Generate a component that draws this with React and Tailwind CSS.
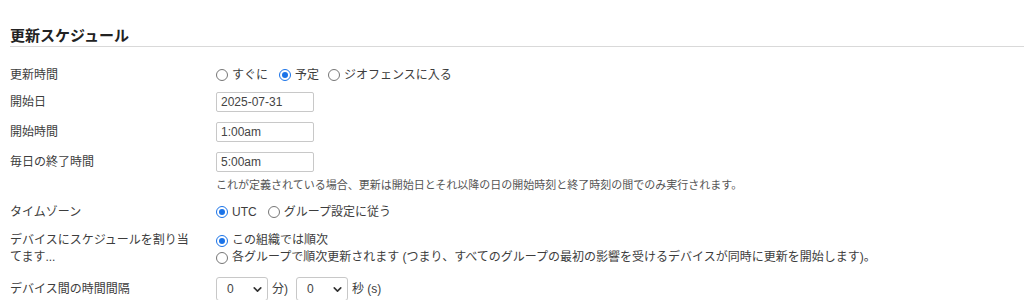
import React from "react";
import { ChevronDown } from "lucide-react";

function Radio({ checked, label, className = "" }) {
  return (
    <label className={`flex items-center gap-[4px] ${className}`}>
      <span
        className={`w-[12px] h-[12px] rounded-full border flex items-center justify-center bg-white ${
          checked ? "border-[#1a73e8]" : "border-[#767676]"
        }`}
      >
        {checked && <span className="w-[6px] h-[6px] rounded-full bg-[#1a73e8]"></span>}
      </span>
      <span>{label}</span>
    </label>
  );
}

function Row({ label, children, h }) {
  return (
    <div className={`flex items-center ${h}`}>
      <div className="w-[206px] pr-[24px] shrink-0">{label}</div>
      <div className="flex items-center">{children}</div>
    </div>
  );
}

function TextBox({ value }) {
  return (
    <div className="w-[98px] h-[20px] border border-[#c8c8c8] rounded-[2px] pl-[4px] flex items-center text-[12px] text-[#444]">
      {value}
    </div>
  );
}

function Select({ value }) {
  return (
    <div className="w-[52px] h-[24px] border border-[#c8c8c8] rounded-[3px] flex items-center justify-between pl-[10px] pr-[3px] text-[12px] text-[#444]">
      <span>{value}</span>
      <ChevronDown size={13} strokeWidth={3} className="text-[#333]" />
    </div>
  );
}

export default function App() {
  return (
    <div
      className="w-[1024px] h-[300px] bg-white text-[12px] text-[#3d3d3d] overflow-hidden pl-[10px]"
      style={{ fontFamily: '"Liberation Sans", "Noto Sans CJK JP", sans-serif' }}
    >
      <div className="pt-[26px] pb-[0px] border-b border-[#d9d9d9]">
        <h2 className="text-[15px] font-bold text-[#222] leading-[20px]">更新スケジュール</h2>
      </div>
      <div className="pt-[13px]">
        <Row label="更新時間" h="h-[30px]">
          <Radio label="すぐに" />
          <Radio label="予定" checked className="ml-[11px]" />
          <Radio label="ジオフェンスに入る" className="ml-[9px]" />
        </Row>
        <Row label="開始日" h="h-[24px]">
          <TextBox value="2025-07-31" />
        </Row>
        <Row label="開始時間" h="h-[36px]">
          <TextBox value="1:00am" />
        </Row>
        <Row label="毎日の終了時間" h="h-[24px]">
          <TextBox value="5:00am" />
        </Row>
        <div className="pl-[206px] text-[11px] text-[#555] h-[22px] flex items-center">
          これが定義されている場合、更新は開始日とそれ以降の日の開始時刻と終了時刻の間でのみ実行されます。
        </div>
        <Row label="タイムゾーン" h="h-[32px]">
          <Radio label="UTC" checked />
          <Radio label="グループ設定に従う" className="ml-[11px]" />
        </Row>
        <div className="flex h-[41px] pt-[4px]">
          <div className="w-[206px] pr-[24px] shrink-0 leading-[17px]">デバイスにスケジュールを割り当てます...</div>
          <div className="flex flex-col leading-[17px]">
            <Radio label="この組織では順次" checked />
            <Radio label="各グループで順次更新されます (つまり、すべてのグループの最初の影響を受けるデバイスが同時に更新を開始します)。" />
          </div>
        </div>
        <Row label="デバイス間の時間間隔" h="h-[40px]">
          <Select value="0" />
          <span className="ml-[4px]">分)</span>
          <span className="ml-[8px]"><Select value="0" /></span>
          <span className="ml-[4px]">秒 (s)</span>
        </Row>
      </div>
    </div>
  );
}
